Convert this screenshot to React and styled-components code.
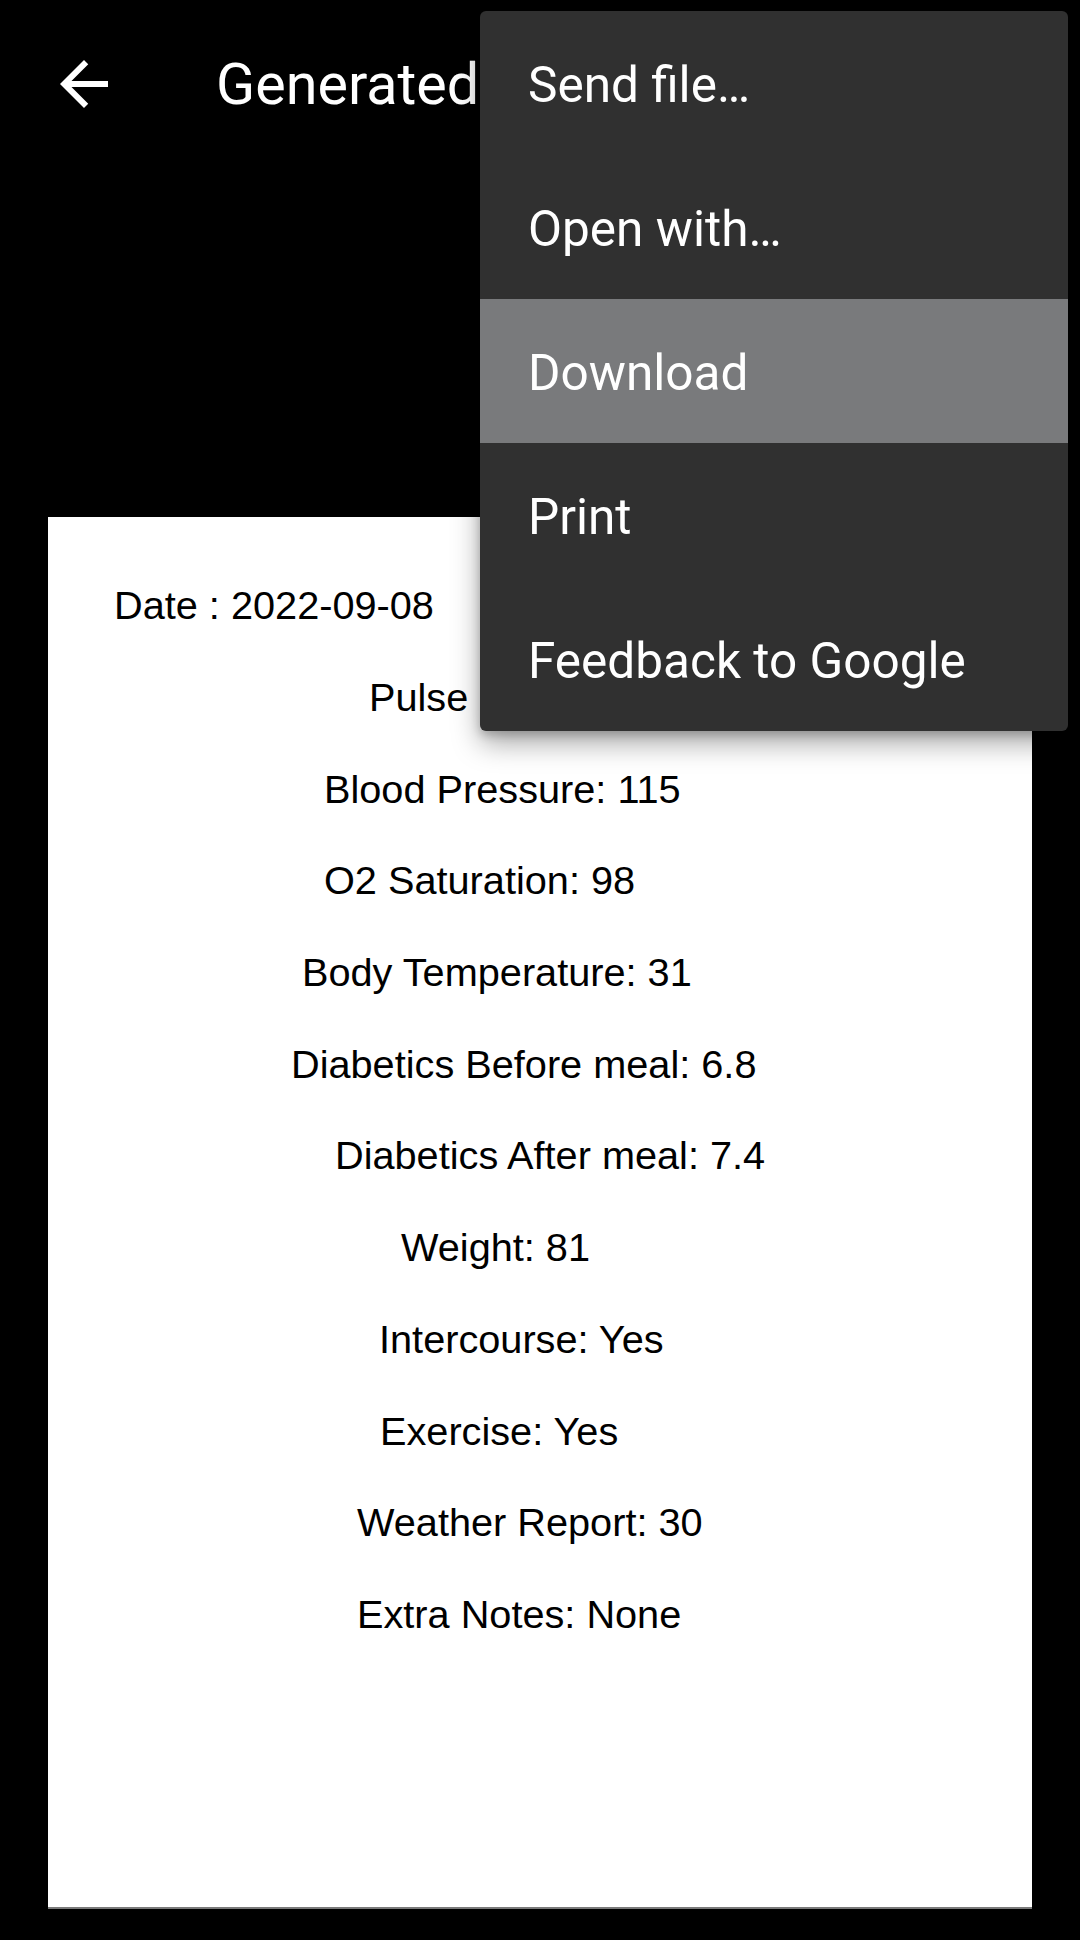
import React from 'react';
import styled, { createGlobalStyle } from 'styled-components';

const GlobalStyle = createGlobalStyle`
body {
  margin: 0;
  background: #000;
}
`;

const Screen = styled.div`
position: relative;
width: 1080px;
height: 1940px;
background: #000;
overflow: hidden;
`;

const Header = styled.div`
height: 168px;
display: flex;
align-items: center;
padding-left: 48px;
box-sizing: border-box;
`;

const BackButton = styled.div`
width: 72px;
height: 72px;
display: flex;
align-items: center;
justify-content: center;
`;

const Title = styled.h1`
margin: 0 0 0 96px;
font-family: Roboto, "Noto Sans", sans-serif;
font-weight: 400;
font-size: 57.5px;
color: #fff;
white-space: nowrap;
`;

const Viewer = styled.div`
padding: 349px 48px 0;
`;

const Document = styled.div`
width: 984px;
height: 1392px;
box-sizing: border-box;
background: #fff;
border-bottom: 2px solid #7a7a7a;
padding-top: 43px;
display: flex;
flex-direction: column;
`;

const Line = styled.div`
height: 91.7px;
display: flex;
align-items: center;
padding-left: ${(p) => p.indent}px;
font-family: "Liberation Sans", Arial, sans-serif;
font-size: 39.7px;
color: #000;
white-space: nowrap;
`;

const Menu = styled.div`
position: absolute;
top: 11px;
left: 480px;
width: 588px;
background: #303030;
border-radius: 6px;
overflow: hidden;
box-shadow: 0 12px 28px rgba(0, 0, 0, 0.35), 0 4px 10px rgba(0, 0, 0, 0.2);
`;

const MenuItem = styled.div`
height: 144px;
display: flex;
align-items: center;
padding: 4px 0 0 48px;
box-sizing: border-box;
background: ${(p) => (p.active ? '#797a7c' : 'transparent')};
font-family: Roboto, "Noto Sans", sans-serif;
font-size: 49.5px;
color: #fff;
`;

const lines = [
  { text: 'Date : 2022-09-08', indent: 66 },
  { text: 'Pulse Rate: 72', indent: 321 },
  { text: 'Blood Pressure: 115', indent: 276 },
  { text: 'O2 Saturation: 98', indent: 276 },
  { text: 'Body Temperature: 31', indent: 254 },
  { text: 'Diabetics Before meal: 6.8', indent: 243 },
  { text: 'Diabetics After meal: 7.4', indent: 287 },
  { text: 'Weight: 81', indent: 353 },
  { text: 'Intercourse: Yes', indent: 331 },
  { text: 'Exercise: Yes', indent: 332 },
  { text: 'Weather Report: 30', indent: 309 },
  { text: 'Extra Notes: None', indent: 309 },
];

const menuItems = ['Send file…', 'Open with…', 'Download', 'Print', 'Feedback to Google'];

const App = () => {
  return (
    <>
      <GlobalStyle />
      <Screen>
        <Header>
          <BackButton>
            <svg width="72" height="72" viewBox="0 0 24 24" fill="#fff">
              <path d="M20 11H7.83l5.59-5.59L12 4l-8 8 8 8 1.41-1.41L7.83 13H20v-2z" />
            </svg>
          </BackButton>
          <Title>Generated Report</Title>
        </Header>
        <Viewer>
          <Document>
            {lines.map((l) => (
              <Line key={l.text} indent={l.indent}>{l.text}</Line>
            ))}
          </Document>
        </Viewer>
        <Menu>
          {menuItems.map((item) => (
            <MenuItem key={item} active={item === 'Download'}>{item}</MenuItem>
          ))}
        </Menu>
      </Screen>
    </>
  );
};

export default App;
